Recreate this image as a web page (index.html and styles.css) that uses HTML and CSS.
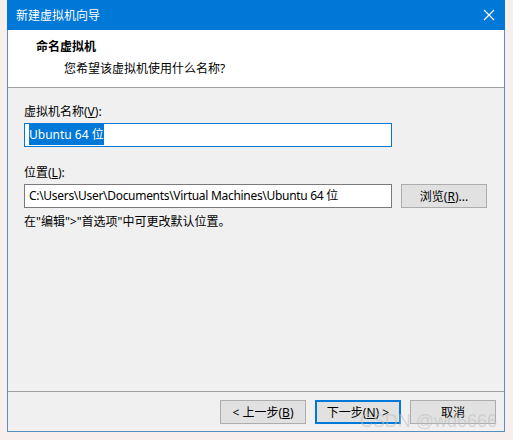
FILE: index.html
```html
<!DOCTYPE html>
<html lang="zh-CN">
<head>
    <meta charset="UTF-8">
    <title>新建虚拟机向导</title>
    <link rel="stylesheet" href="styles.css">
</head>
<body>
    <div class="window">
        <div class="titlebar">
            <span class="title">新建虚拟机向导</span>
            <svg class="close" width="12" height="12" viewBox="0 0 12 12">
                <path d="M1 1 L11 11 M11 1 L1 11" stroke="#fff" stroke-width="1.2" fill="none"/>
            </svg>
        </div>
        <div class="header">
            <div class="head-title">命名虚拟机</div>
            <div class="head-sub">您希望该虚拟机使用什么名称?</div>
        </div>
        <div class="content">
            <div class="form-group">
                <label>虚拟机名称(<u>V</u>):</label>
                <div class="row">
                    <div class="input focused"><span class="selected">Ubuntu 64 位</span></div>
                </div>
            </div>
            <div class="form-group">
                <label>位置(<u>L</u>):</label>
                <div class="row">
                    <div class="input path">C:\Users\User\Documents\Virtual Machines\Ubuntu 64 位</div>
                    <button class="btn">浏览(<u>R</u>)...</button>
                </div>
                <div class="hint">在"编辑"&gt;"首选项"中可更改默认位置。</div>
            </div>
        </div>
        <div class="footer">
            <button class="btn">&lt; 上一步(<u>B</u>)</button>
            <button class="btn primary">下一步(<u>N</u>) &gt;</button>
            <button class="btn">取消</button>
        </div>
    </div>
    <div class="watermark">CSDN @wd6666</div>
</body>
</html>
```

FILE: styles.css
```css
body {
    margin: 0;
    background-color: #f6efeb;
    font-family: "Noto Sans", "Noto Sans CJK SC", sans-serif;
    font-size: 12px;
    color: #000;
    width: 513px;
    height: 440px;
    position: relative;
    overflow: hidden;
}
.window {
    margin-left: 7px;
    width: 498px;
    height: 432px;
    box-sizing: border-box;
    border: 1px solid #5a8cc6;
    border-top: none;
    background-color: #f0f0f0;
    display: flex;
    flex-direction: column;
}
.titlebar {
    height: 30px;
    background-color: #0078d7;
    display: flex;
    align-items: center;
    justify-content: space-between;
    padding: 0 10px 0 9px;
    margin: 0 -1px;
    color: #fff;
}
.title {
    font-size: 12px;
}
.header {
    height: 57px;
    background-color: #fff;
    border-bottom: 1px solid #a0a0a0;
    padding-left: 28px;
}
.head-title {
    font-weight: bold;
    margin-top: 10px;
    line-height: 14px;
}
.head-sub {
    margin-top: 8px;
    margin-left: 28px;
    line-height: 14px;
}
.content {
    flex: 1;
    padding: 17px 0 0 16px;
    border-bottom: 1px solid #a0a0a0;
}
.form-group {
    margin-bottom: 19px;
}
label {
    display: block;
    line-height: 14px;
    margin-bottom: 4px;
}
.row {
    display: flex;
    align-items: center;
    gap: 9px;
}
.input {
    width: 368px;
    height: 24px;
    box-sizing: border-box;
    border: 1px solid #7a7a7a;
    background-color: #fff;
    padding: 0 4px;
    line-height: 22px;
    white-space: nowrap;
}
.focused {
    border-color: #0078d7;
}
.path {
    letter-spacing: -0.3px;
}
.selected {
    background-color: #0078d7;
    color: #fff;
    padding: 2px 0;
}
.btn {
    width: 86px;
    height: 24px;
    border: 1px solid #adadad;
    background-color: #e1e1e1;
    font-family: inherit;
    font-size: 12px;
    padding: 0;
    color: #000;
}
.hint {
    margin-top: 7px;
    line-height: 14px;
}
.footer {
    height: 39px;
    display: flex;
    justify-content: flex-end;
    align-items: center;
    gap: 9px;
    padding-right: 8px;
}
.primary {
    border: 2px solid #0078d7;
}
.watermark {
    position: absolute;
    right: 16px;
    bottom: 8px;
    font-size: 18px;
    color: rgba(190, 190, 190, 0.55);
    font-family: "Liberation Sans", sans-serif;
}
```
